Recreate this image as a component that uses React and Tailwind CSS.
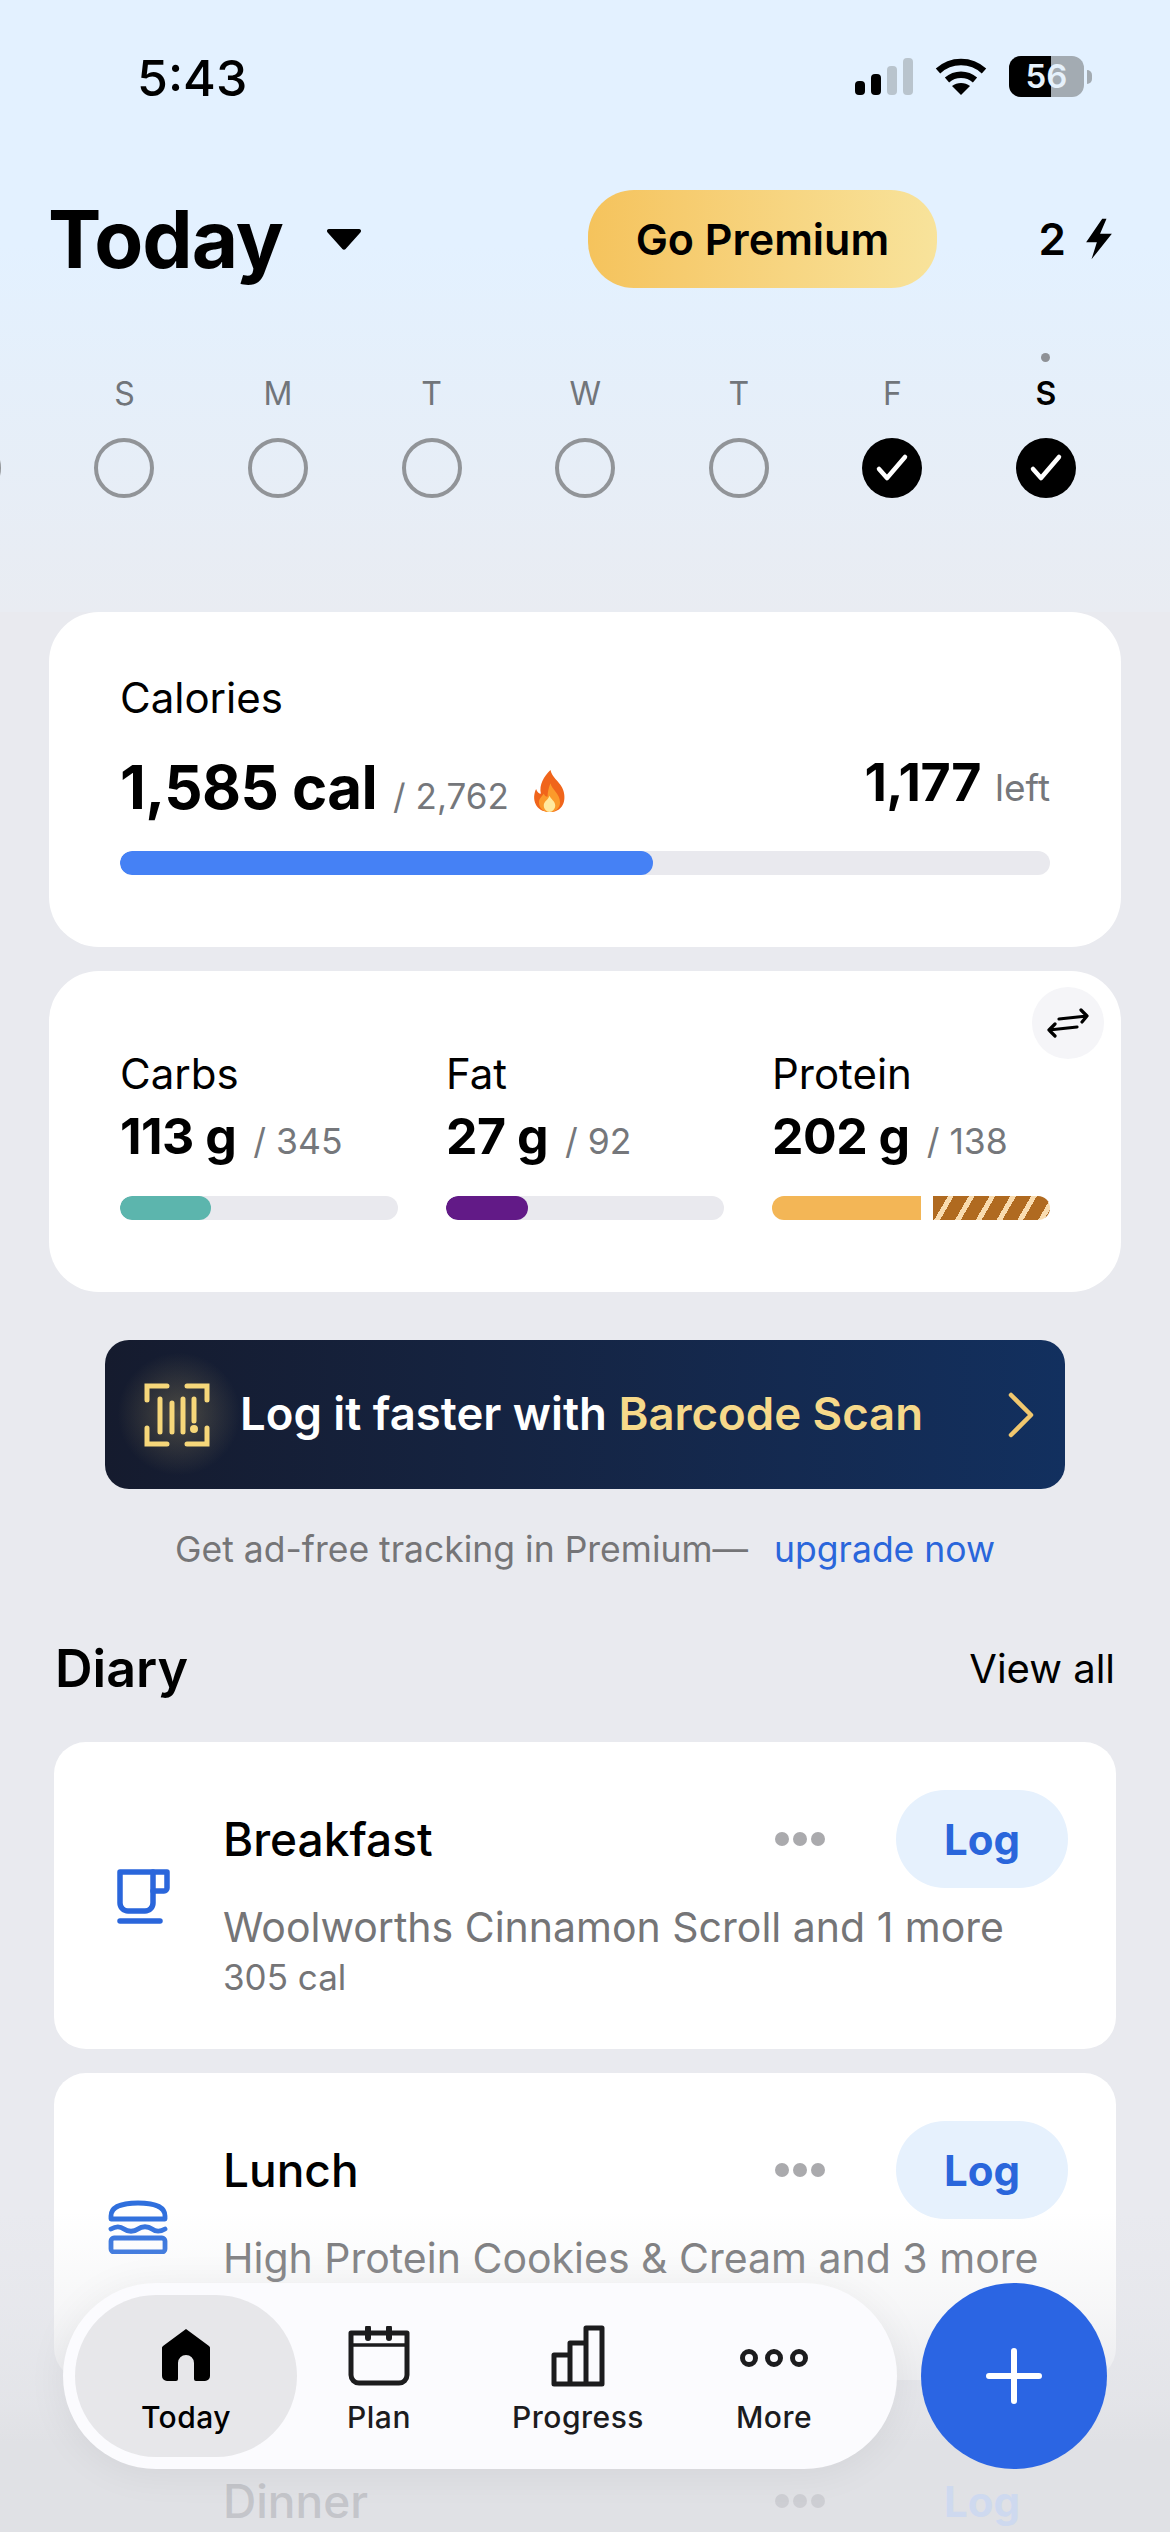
import React from 'react'

const days = [
  { label: '' },
  { label: 'S' },
  { label: 'M' },
  { label: 'T' },
  { label: 'W' },
  { label: 'T' },
  { label: 'F', done: true },
  { label: 'S', done: true, today: true },
  { label: '' },
]

function Check() {
  return (
    <svg width="34" height="30" viewBox="0 0 34 30" fill="none">
      <path d="M4 16l8 9L30 4" stroke="#fff" strokeWidth="4.5" strokeLinecap="round" strokeLinejoin="round" />
    </svg>
  )
}

function StatusBar() {
  return (
    <div className="flex h-[150px] items-start justify-between pl-[137px] pr-[78px] pt-[48px]">
      <span className="text-[50px] leading-[60px] font-medium text-black">5:43</span>
      <div className="flex items-center pt-[8px]">
        <svg width="60" height="40" viewBox="0 0 60 40">
          <rect x="0" y="24" width="10" height="14" rx="4" fill="#000" />
          <rect x="16" y="17" width="10" height="21" rx="4" fill="#000" />
          <rect x="32" y="9" width="10" height="29" rx="4" fill="#b9c4cd" />
          <rect x="48" y="1" width="10" height="37" rx="4" fill="#b9c4cd" />
        </svg>
        <svg className="ml-[20px]" width="52" height="40" viewBox="0 0 52 40" fill="none" stroke="#000" strokeWidth="6.5">
          <path d="M3 14c13-12 33-12 46 0" />
          <path d="M12 23c8-7 20-7 28 0" />
          <path d="M26 38l-9-9c5-4 13-4 18 0z" fill="#000" stroke="none" />
        </svg>
        <div className="relative ml-[22px] flex h-[41px] w-[75px] items-center justify-center overflow-hidden rounded-[12px] bg-[#a3abb2]">
          <div className="absolute inset-y-0 left-0 w-[42px] bg-black" />
          <span className="relative text-[33px] leading-none font-semibold text-[#e6f1fb]">56</span>
        </div>
        <div className="ml-[3px] h-[14px] w-[5px] rounded-r-full bg-[#a3abb2]" />
      </div>
    </div>
  )
}

function Header() {
  return (
    <div className="mt-[40px] flex h-[98px] items-center pl-[48px] pr-[56px]">
      <h1 className="text-[80px] leading-none font-bold tracking-[-1px] text-black">Today</h1>
      <svg className="ml-[42px]" width="38" height="24" viewBox="0 0 38 24">
        <path d="M4 2h30a2 2 0 0 1 1.6 3.2L20.6 22a2 2 0 0 1-3.2 0L2.4 5.2A2 2 0 0 1 4 2z" fill="#000" />
      </svg>
      <button className="ml-[225px] flex h-[98px] w-[349px] items-center justify-center rounded-[46px] bg-gradient-to-r from-[#f5c35c] to-[#f8e39b] text-[43px] font-semibold text-black">
        Go Premium
      </button>
      <span className="ml-auto text-[44px] font-semibold text-black">2</span>
      <svg className="ml-[18px]" width="30" height="44" viewBox="0 0 28 40">
        <path d="M17 1L2 23h10L7 39l19-24H15l6-14z" fill="#000" />
      </svg>
    </div>
  )
}

function WeekRow() {
  return (
    <div className="ml-[-106px] mt-[65px] grid w-[1382.4px] grid-cols-9">
      {days.map((d, i) => (
        <div key={i} className="flex flex-col items-center">
          <div className={d.today ? 'h-[9px] w-[9px] rounded-full bg-[#8e9196]' : 'h-[9px] w-[9px]'} />
          <span className={d.today ? 'mt-[12px] h-[40px] text-[32px] leading-[40px] font-semibold text-black' : 'mt-[12px] h-[40px] text-[32px] leading-[40px] font-normal text-[#71757a]'}>
            {d.label}
          </span>
          {d.done ? (
            <div className="mt-[24px] flex h-[60px] w-[60px] items-center justify-center rounded-full bg-black">
              <Check />
            </div>
          ) : (
            <div className="mt-[24px] h-[60px] w-[60px] rounded-full border-[4px] border-[#919498]" />
          )}
        </div>
      ))}
    </div>
  )
}

function Flame() {
  return (
    <svg width="37" height="44" viewBox="0 0 38 46">
      <path d="M20 1c2 8 8 11 12 18 5 9 4 26-13 26C4 45 0 31 5 21c1 3 3 5 5 5C8 16 13 8 20 1z" fill="#f0651b" />
      <path d="M20 15c1 6 10 11 10 20 0 6-5 10-11 10S8 41 8 35c0-4 3-6 5-9 1 2 2 3 4 3 0-4 1-9 3-14z" fill="#fb9a2b" />
      <path d="M19 28c1 3 6 6 6 10 0 4-3 7-6 7s-6-3-6-7c0-4 5-6 6-10z" fill="#ffeaa0" />
    </svg>
  )
}

function CaloriesCard() {
  return (
    <div className="mx-[49px] mt-[114px] h-[335px] rounded-[50px] bg-white px-[71px] pt-[62px]">
      <p className="text-[42px] leading-[48px] text-black">Calories</p>
      <div className="mt-[29px] flex h-[72px] items-baseline">
        <span className="text-[60px] leading-[72px] font-bold tracking-[-0.6px] text-black">1,585 cal</span>
        <span className="ml-[16px] text-[35px] text-[#75777b]">/ 2,762</span>
        <span className="ml-[22px] self-center pt-[8px]"><Flame /></span>
        <span className="ml-auto -translate-y-[8px] text-[52px] font-bold tracking-[-0.5px] text-black">1,177</span>
        <span className="ml-[14px] -translate-y-[8px] text-[37px] text-[#75777b]">left</span>
      </div>
      <div className="mt-[28px] h-[24px] w-full overflow-hidden rounded-full bg-[#e9e9ee]">
        <div className="h-full w-[533px] rounded-full bg-[#4581f5]" />
      </div>
    </div>
  )
}

function Macro({ label, value, goal, children }) {
  return (
    <div className="w-[278px]">
      <p className="text-[42px] leading-[48px] text-black">{label}</p>
      <div className="mt-[8px] flex h-[60px] items-baseline">
        <span className="text-[50px] leading-[60px] font-bold tracking-[-0.5px] text-black">{value}</span>
        <span className="ml-[17px] text-[35.5px] text-[#75777b]">/ {goal}</span>
      </div>
      <div className="mt-[30px]">{children}</div>
    </div>
  )
}

function MacroCard() {
  return (
    <div className="relative mx-[49px] mt-[24px] flex h-[321px] gap-[48px] rounded-[50px] bg-white px-[71px] pt-[79px]">
      <button className="absolute right-[17px] top-[16px] flex h-[72px] w-[72px] items-center justify-center rounded-full bg-[#f5f5f8]">
        <svg width="42" height="30" viewBox="0 0 42 30" fill="none" stroke="#000" strokeWidth="3.2" strokeLinecap="round" strokeLinejoin="round">
          <path d="M12 11l28-3M34 2l6 6-5 6" />
          <path d="M30 19L2 22M8 16l-6 6 6 6" />
        </svg>
      </button>
      <Macro label="Carbs" value="113 g" goal="345">
        <div className="h-[24px] overflow-hidden rounded-full bg-[#e9e9ee]">
          <div className="h-full w-[91px] rounded-full bg-[#5cb5ad]" />
        </div>
      </Macro>
      <Macro label="Fat" value="27 g" goal="92">
        <div className="h-[24px] overflow-hidden rounded-full bg-[#e9e9ee]">
          <div className="h-full w-[82px] rounded-full bg-[#621a87]" />
        </div>
      </Macro>
      <Macro label="Protein" value="202 g" goal="138">
        <div className="flex h-[24px] gap-[12px]">
          <div className="h-full w-[149px] rounded-l-full bg-[#f3b656]" />
          <div className="h-full w-[117px] rounded-r-full bg-[repeating-linear-gradient(120deg,#b06a20_0_13px,#f9dcb0_13px_18px)]" />
        </div>
      </Macro>
    </div>
  )
}

function Banner() {
  return (
    <div className="relative mx-[105px] mt-[48px] flex h-[149px] items-center overflow-hidden rounded-[24px] bg-gradient-to-r from-[#151b2e] to-[#12305f]">
      <div className="absolute left-[12px] top-[12px] h-[124px] w-[124px] rounded-full bg-[radial-gradient(circle,rgba(246,215,122,0.24),rgba(246,215,122,0)_70%)]" />
      <svg className="relative ml-[39px]" width="66" height="66" viewBox="0 0 66 66" fill="none" stroke="#f6d77a" strokeWidth="5" strokeLinecap="round">
        <path d="M3 18V4h20M43 4h20v14M3 46v16h20M43 62h20V46" />
        <path d="M16 17v33M28 21v29M39 17v33M50 17v22" />
        <circle cx="50" cy="47" r="1.5" fill="#f6d77a" />
      </svg>
      <p className="relative ml-[30px] text-[45.5px] font-semibold whitespace-nowrap text-white">
        Log it faster with <span className="text-[#f6d98a]">Barcode Scan</span>
      </p>
      <svg className="absolute right-[30px] top-[52px]" width="28" height="46" viewBox="0 0 28 46" fill="none" stroke="#f0c76e" strokeWidth="4.5" strokeLinecap="round" strokeLinejoin="round">
        <path d="M4 3l20 20L4 43" />
      </svg>
    </div>
  )
}

function MealIcon({ type }) {
  if (type === 'breakfast') {
    return (
      <svg className="ml-[63px]" width="54" height="56" viewBox="0 0 54 56" fill="none" stroke="#2a66db" strokeWidth="5.5" strokeLinecap="round" strokeLinejoin="round">
        <path d="M3 4h33v31a8 8 0 0 1-8 8H11a8 8 0 0 1-8-8z" />
        <path d="M36 4h14v16a3 3 0 0 1-3 3H36" />
        <path d="M3 53h40" />
      </svg>
    )
  }
  if (type === 'lunch') {
    return (
      <svg className="ml-[54px]" width="60" height="54" viewBox="0 0 60 54" fill="none" stroke="#2f6fdd" strokeWidth="4.8" strokeLinecap="round" strokeLinejoin="round">
        <path d="M3 16C3 7 14 3 30 3s27 4 27 13v3H3z" />
        <path d="M3 29c5-3 9-3 13 0 4 3 10 3 14 0 4-3 10-3 14 0 4 3 8 3 13 0" />
        <rect x="3" y="38" width="54" height="14" rx="3" />
      </svg>
    )
  }
  return null
}

function MealCard({ name, type, detail, calories, faded }) {
  return (
    <div className={faded ? 'relative z-10 mx-[54px] flex h-[307px] items-center rounded-[32px] pr-[48px]' : 'mx-[54px] flex h-[307px] items-center rounded-[32px] bg-white pr-[48px]'}>
      <div className="w-[169px] shrink-0 self-center">
        <MealIcon type={type} />
      </div>
      <div className="flex-1 self-stretch pt-[48px]">
        <div className="flex h-[98px] items-center">
          <span className={faded ? 'text-[46px] font-medium text-[#c4c5ca]' : 'text-[46px] font-medium text-black'}>{name}</span>
          <div className="ml-auto flex gap-[4px]">
            <span className={faded ? 'h-[14px] w-[14px] rounded-full bg-[#cdced3]' : 'h-[14px] w-[14px] rounded-full bg-[#aaaaad]'} />
            <span className={faded ? 'h-[14px] w-[14px] rounded-full bg-[#cdced3]' : 'h-[14px] w-[14px] rounded-full bg-[#aaaaad]'} />
            <span className={faded ? 'h-[14px] w-[14px] rounded-full bg-[#cdced3]' : 'h-[14px] w-[14px] rounded-full bg-[#aaaaad]'} />
          </div>
          <button className={faded ? 'ml-[71px] flex h-[98px] w-[172px] items-center justify-center rounded-[49px] text-[42px] font-bold text-[#ced9ef]' : 'ml-[71px] flex h-[98px] w-[172px] items-center justify-center rounded-[49px] bg-[#e6f1fd] text-[42px] font-bold text-[#2a66db]'}>
            Log
          </button>
        </div>
        {detail && <p className="mt-[14px] text-[41px] leading-[50px] whitespace-nowrap text-[#757577]">{detail}</p>}
        {calories && <p className="mt-[5px] text-[35px] leading-[40px] text-[#757577]">{calories}</p>}
      </div>
    </div>
  )
}

function TabBar() {
  return (
    <div className="absolute inset-x-0 top-[2283px] z-20 flex items-start pl-[63px]">
      <div className="relative flex h-[186px] w-[834px] rounded-[93px] bg-[#fbfbfe] pl-[12px] pt-[12px] shadow-[0_4px_40px_rgba(0,0,0,0.06)]">
        <div className="flex h-[162px] w-[222px] flex-col items-center rounded-[81px] bg-[#e7e7ea] pt-[33px]">
          <svg width="50" height="54" viewBox="0 0 50 54">
            <path d="M25 1l23 17a3 3 0 0 1 1 3v27a5 5 0 0 1-5 5h-9a2 2 0 0 1-2-2V35a8 8 0 0 0-16 0v16a2 2 0 0 1-2 2H6a5 5 0 0 1-5-5V21a3 3 0 0 1 1-3z" fill="#000" />
          </svg>
          <span className="mt-[15px] text-[30px] leading-[40px] font-medium tracking-[0.5px] text-black">Today</span>
        </div>
        <div className="flex w-[164px] flex-col items-center pt-[31px]">
          <svg width="62" height="60" viewBox="0 0 62 60" fill="none" stroke="#1c1c1e" strokeWidth="5" strokeLinecap="round" strokeLinejoin="round">
            <path d="M3 7h56v42a8 8 0 0 1-8 8H11a8 8 0 0 1-8-8z" />
            <path d="M3 19h56" strokeWidth="3.5" />
            <path d="M20 2v10M41 2v10" strokeWidth="6" />
          </svg>
          <span className="mt-[11px] text-[30px] leading-[40px] font-medium tracking-[0.5px] text-[#1c1c1e]">Plan</span>
        </div>
        <div className="flex w-[234px] flex-col items-center pt-[30px]">
          <svg width="54" height="62" viewBox="0 0 54 62" fill="none" stroke="#1c1c1e" strokeWidth="5" strokeLinejoin="round">
            <path d="M3 30h16v29H3zM19 18h16v41H19zM35 3h16v56H35z" />
          </svg>
          <span className="mt-[10px] text-[30px] leading-[40px] font-medium tracking-[0.5px] text-[#1c1c1e]">Progress</span>
        </div>
        <div className="flex w-[158px] flex-col items-center pt-[54px]">
          <svg width="68" height="18" viewBox="0 0 68 18" fill="none" stroke="#1c1c1e" strokeWidth="5">
            <circle cx="9" cy="9" r="6.5" />
            <circle cx="34" cy="9" r="6.5" />
            <circle cx="59" cy="9" r="6.5" />
          </svg>
          <span className="mt-[30px] text-[30px] leading-[40px] font-medium tracking-[0.5px] text-[#1c1c1e]">More</span>
        </div>
      </div>
      <button className="ml-[24px] flex h-[186px] w-[186px] items-center justify-center rounded-full bg-[#2b65e3]">
        <svg width="56" height="56" viewBox="0 0 56 56" stroke="#fff" strokeWidth="6" strokeLinecap="round">
          <path d="M28 3v50M3 28h50" />
        </svg>
      </button>
    </div>
  )
}

export default function App() {
  return (
    <div className="relative h-[2532px] w-[1170px] overflow-hidden bg-[#e9eaef] font-['Inter',sans-serif]">
      <div className="absolute inset-x-0 top-0 h-[612px] bg-gradient-to-b from-[#e3f1ff] from-[40%] to-[#e9ecf2]" />
      <div className="relative">
        <StatusBar />
        <Header />
        <WeekRow />
        <CaloriesCard />
        <MacroCard />
        <Banner />
        <p className="mt-[36px] text-center text-[35.5px] leading-[50px] text-[#757577]">
          Get ad-free tracking in Premium—
          <span className="ml-[26px] text-[#2a66db]">upgrade now</span>
        </p>
        <div className="mx-[55px] mt-[62px] flex h-[64px] items-center justify-between">
          <h2 className="text-[52px] font-semibold text-black">Diary</h2>
          <span className="text-[40px] text-black">View all</span>
        </div>
        <div className="mt-[41px] flex flex-col gap-[24px]">
          <MealCard name="Breakfast" type="breakfast" detail="Woolworths Cinnamon Scroll and 1 more" calories="305 cal" />
          <MealCard name="Lunch" type="lunch" detail="High Protein Cookies & Cream and 3 more" />
          <MealCard name="Dinner" type="dinner" faded />
        </div>
      </div>
      <div className="absolute inset-x-0 bottom-0 h-[320px] bg-[linear-gradient(to_bottom,rgba(226,227,231,0)_0%,rgba(226,227,231,0.3)_30%,rgba(226,227,231,0.8)_60%,rgba(224,225,229,1)_72%)]" />
      <TabBar />
    </div>
  )
}
